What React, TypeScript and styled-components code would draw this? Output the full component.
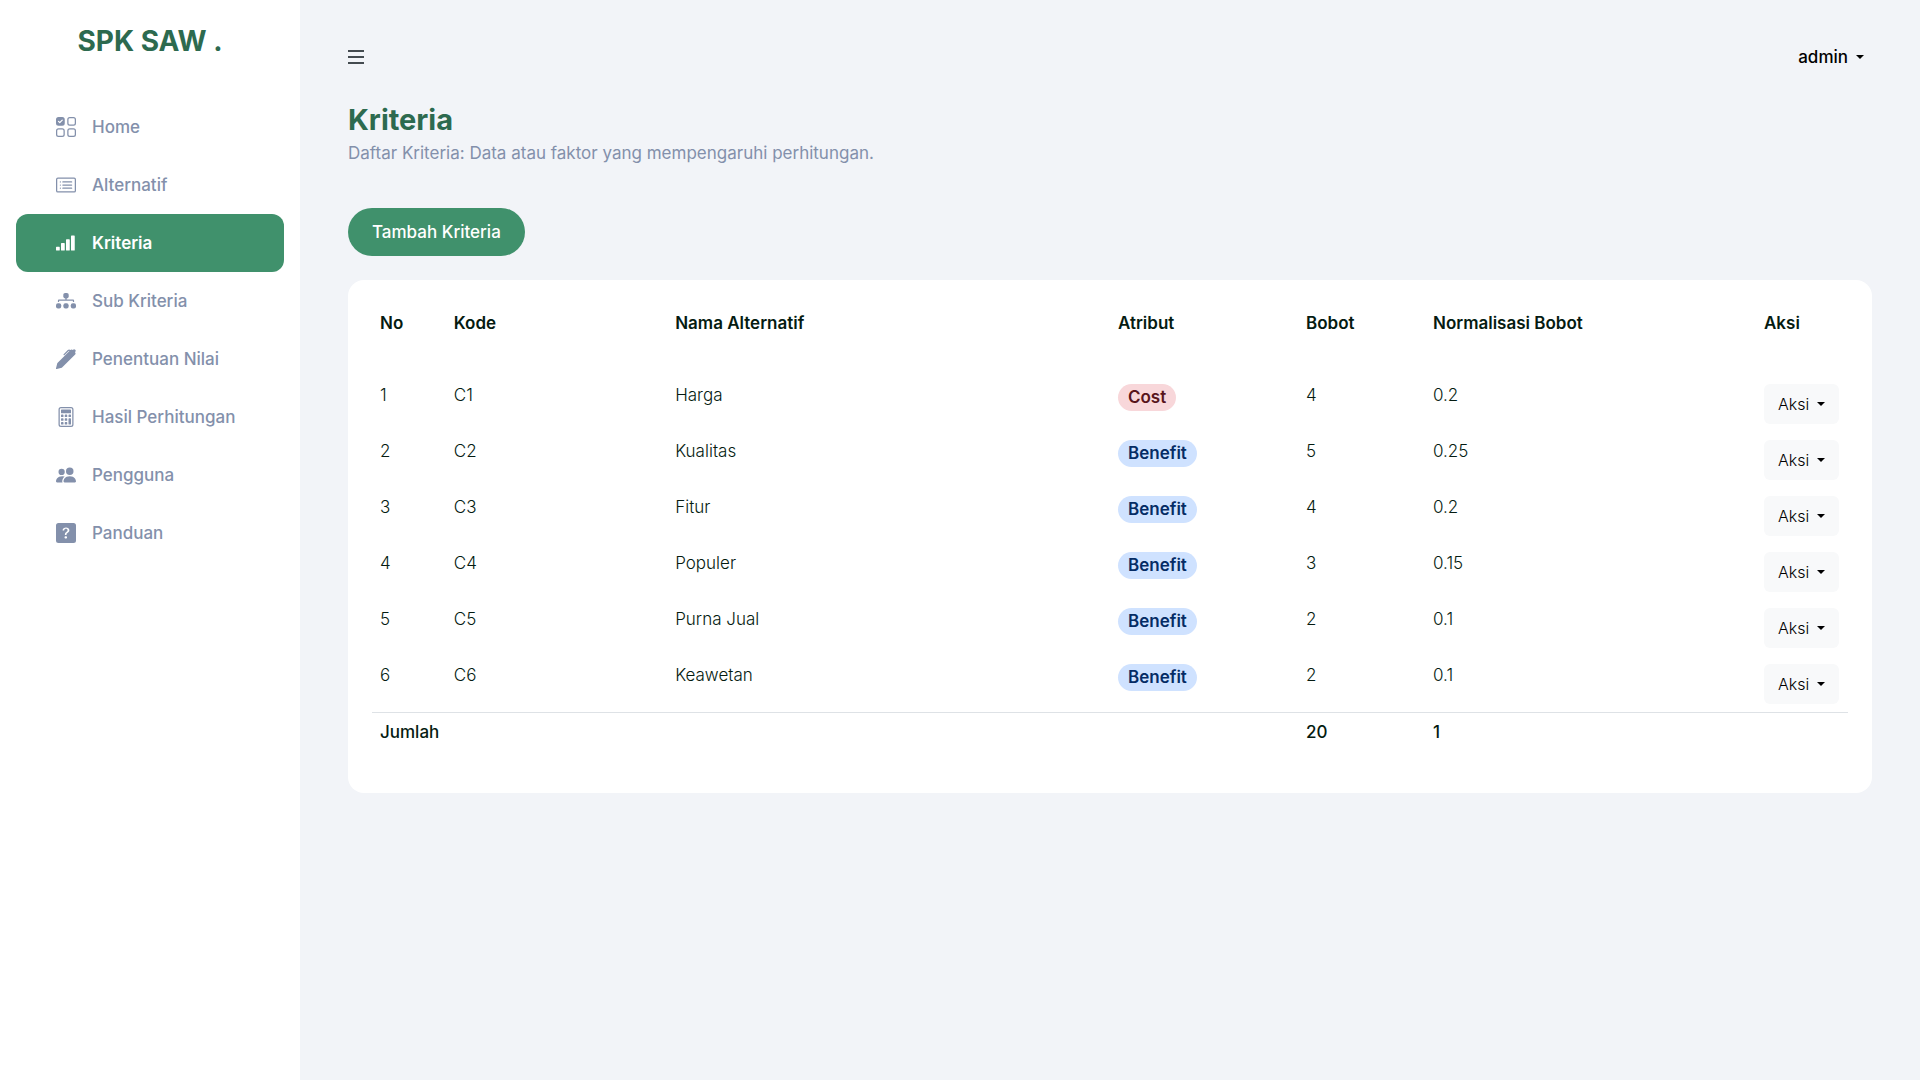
import React from "react";
import styled, { createGlobalStyle } from "styled-components";
import {
  BsUiChecksGrid,
  BsCardList,
  BsReception4,
  BsPenFill,
  BsCalculator,
  BsPeopleFill,
  BsQuestionSquareFill,
} from "react-icons/bs";

const GlobalStyle = createGlobalStyle`
  *, *::before, *::after { box-sizing: border-box; }
  body {
    margin: 0;
    background: #f2f4f8;
    color: #051b11;
    font-family: Inter, "Open Sans", sans-serif;
    font-size: 17px;
    line-height: 24px;
  }
  button { font: inherit; cursor: pointer; }
`;

const Shell = styled.div`
  display: flex;
  min-height: 100vh;
`;

const Sidebar = styled.aside`
  flex: 0 0 300px;
  padding: 20px 16px;
  background: #fff;
`;

const Brand = styled.a`
  display: block;
  color: #2d6a4f;
  font-size: 28px;
  font-weight: 700;
  line-height: 42px;
  text-align: center;
  text-decoration: none;
`;

const Menu = styled.ul`
  margin: 36px 0 0;
  padding: 0;
  list-style: none;
`;

const MenuLink = styled.a<{ $active?: boolean }>`
  display: flex;
  align-items: center;
  gap: 16px;
  height: 58px;
  padding: 0 40px;
  border-radius: 12px;
  background: ${(p) => (p.$active ? "#40916c" : "transparent")};
  color: ${(p) => (p.$active ? "#fff" : "#8390ab")};
  font-weight: ${(p) => (p.$active ? 600 : 500)};
  text-decoration: none;

  svg { flex: none; width: 20px; height: 20px; }
`;

const Main = styled.main`
  flex: 1;
  min-width: 0;
  padding: 36px 48px;
`;

const TopBar = styled.header`
  display: flex;
  align-items: center;
  justify-content: space-between;
  height: 42px;
`;

const IconButton = styled.button`
  display: flex;
  padding: 0;
  border: 0;
  background: none;
  color: #444b50;
`;

const Dropdown = styled.button<{ $tone?: "light" }>`
  display: inline-flex;
  align-items: center;
  gap: 8px;
  height: 40px;
  padding: ${(p) => (p.$tone ? "0 14px" : "0 8px")};
  border: 0;
  border-radius: 6px;
  background: ${(p) => (p.$tone ? "#f8f9fa" : "transparent")};
  color: #000;
  font-size: ${(p) => (p.$tone ? "16px" : "17px")};
  font-weight: ${(p) => (p.$tone ? 300 : 500)};
  vertical-align: top;

  &::after {
    content: "";
    border: 4px solid transparent;
    border-top-color: currentColor;
    border-bottom: 0;
  }
`;

const Title = styled.h1`
  margin: 24px 0 0;
  color: #2d6a4f;
  font-size: 29px;
  font-weight: 700;
  line-height: 36px;
`;

const Subtitle = styled.p`
  margin: 3px 0 0;
  color: #8390ab;
`;

const PrimaryButton = styled.button`
  height: 48px;
  margin: 43px 0 24px;
  padding: 0 24px;
  border: 0;
  border-radius: 24px;
  background: #40916c;
  color: #fff;
  font-weight: 500;
`;

const Card = styled.section`
  padding: 24px 24px 42px;
  border-radius: 16px;
  background: #fff;
`;

const Table = styled.table`
  width: 100%;
  table-layout: fixed;
  border-collapse: collapse;
  line-height: 22px;
  text-align: left;

  th, td { padding: 8px; vertical-align: top; }
  thead th { padding-bottom: 42px; font-weight: 600; }
  tbody td { height: 56px; font-weight: 300; }
  tfoot tr { border-top: 1px solid #dee2e6; }
  tfoot th, tfoot td { font-weight: 500; }
`;

const Col = styled.col<{ $width?: string }>`
  width: ${(p) => p.$width ?? "auto"};
`;

const Badge = styled.span<{ $kind: string }>`
  display: inline-block;
  padding: 0 10px;
  border-radius: 14px;
  background: ${(p) => (p.$kind === "Cost" ? "#f8d7da" : "#cfe2ff")};
  color: ${(p) => (p.$kind === "Cost" ? "#58151c" : "#052c65")};
  font-weight: 600;
  line-height: 27px;
  vertical-align: top;
`;

const HierarchyIcon = () => (
  <svg viewBox="0 0 20 20" fill="currentColor" aria-hidden>
    <rect x="7.3" y="2" width="5.4" height="5.4" rx="1.8" />
    <path d="M9.4 7h1.2v1.6h6.6c.5 0 .9.4.9.9V11h-1.2V9.8H3.1V11H1.9V9.500c0-.5.4-.9.9-.9h6.600z" />
    <rect x="0" y="12.300" width="5.2" height="5.2" rx="2" />
    <rect x="7.4" y="12.300" width="5.2" height="5.2" rx="2" />
    <rect x="14.8" y="12.300" width="5.2" height="5.2" rx="2" />
  </svg>
);

const menu: { label: string; icon: React.ComponentType }[] = [
  { label: "Home", icon: BsUiChecksGrid },
  { label: "Alternatif", icon: BsCardList },
  { label: "Kriteria", icon: BsReception4 },
  { label: "Sub Kriteria", icon: HierarchyIcon },
  { label: "Penentuan Nilai", icon: BsPenFill },
  { label: "Hasil Perhitungan", icon: BsCalculator },
  { label: "Pengguna", icon: BsPeopleFill },
  { label: "Panduan", icon: BsQuestionSquareFill },
];

const rows = [
  { code: "C1", name: "Harga", kind: "Cost", weight: 4, norm: 0.2 },
  { code: "C2", name: "Kualitas", kind: "Benefit", weight: 5, norm: 0.25 },
  { code: "C3", name: "Fitur", kind: "Benefit", weight: 4, norm: 0.2 },
  { code: "C4", name: "Populer", kind: "Benefit", weight: 3, norm: 0.15 },
  { code: "C5", name: "Purna Jual", kind: "Benefit", weight: 2, norm: 0.1 },
  { code: "C6", name: "Keawetan", kind: "Benefit", weight: 2, norm: 0.1 },
];

const columns = [
  { label: "No", width: "5%" },
  { label: "Kode", width: "15%" },
  { label: "Nama Alternatif", width: "30%" },
  { label: "Atribut", width: "188px" },
  { label: "Bobot", width: "127px" },
  { label: "Normalisasi Bobot" },
  { label: "Aksi", width: "92px" },
];

export default function App() {
  return (
    <>
      <GlobalStyle />
      <Shell>
        <Sidebar>
          <Brand href="#">SPK SAW .</Brand>
          <nav>
            <Menu>
              {menu.map(({ label, icon: Icon }) => (
                <li key={label}>
                  <MenuLink href="#" $active={label === "Kriteria"}>
                    <Icon />
                    {label}
                  </MenuLink>
                </li>
              ))}
            </Menu>
          </nav>
        </Sidebar>
        <Main>
          <TopBar>
            <IconButton type="button" aria-label="Menu">
              <svg width="16" height="16" viewBox="0 0 16 16" stroke="currentColor" strokeWidth="2">
                <path d="M0 2h16M0 8h16M0 14h16" />
              </svg>
            </IconButton>
            <Dropdown type="button">admin</Dropdown>
          </TopBar>
          <Title>Kriteria</Title>
          <Subtitle>Daftar Kriteria: Data atau faktor yang mempengaruhi perhitungan.</Subtitle>
          <PrimaryButton type="button">Tambah Kriteria</PrimaryButton>
          <Card>
            <Table>
              <colgroup>
                {columns.map((c) => (
                  <Col key={c.label} $width={c.width} />
                ))}
              </colgroup>
              <thead>
                <tr>
                  {columns.map((c) => (
                    <th key={c.label} scope="col">{c.label}</th>
                  ))}
                </tr>
              </thead>
              <tbody>
                {rows.map((r, i) => (
                  <tr key={r.code}>
                    <td>{i + 1}</td>
                    <td>{r.code}</td>
                    <td>{r.name}</td>
                    <td><Badge $kind={r.kind}>{r.kind}</Badge></td>
                    <td>{r.weight}</td>
                    <td>{r.norm}</td>
                    <td><Dropdown type="button" $tone="light">Aksi</Dropdown></td>
                  </tr>
                ))}
              </tbody>
              <tfoot>
                <tr>
                  <th scope="row" colSpan={4}>Jumlah</th>
                  <td>20</td>
                  <td>1</td>
                  <td />
                </tr>
              </tfoot>
            </Table>
          </Card>
        </Main>
      </Shell>
    </>
  );
}
